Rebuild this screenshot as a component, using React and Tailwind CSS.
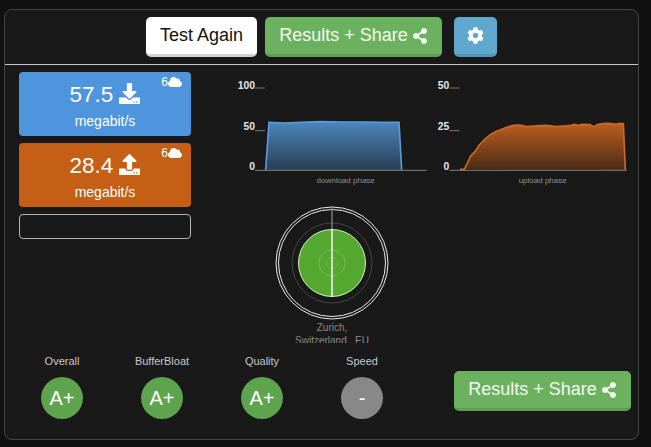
import React from "react";
import { FaCloud, FaCog, FaDownload, FaShareAlt, FaUpload } from "react-icons/fa";

const FONT = "font-['Liberation_Sans',Arial,sans-serif]";

const uploadLine =
  "90,298 103,298 112,280 122,258 135,245 148,225 165,207 182,193 197,185 215,178 232,171 250,166 270,165 290,170 310,168 330,167 350,166 378,170 400,168 420,167 432,163 445,166 458,163 480,164 490,170 505,163 525,160 545,161 558,163 570,160 580,161 586,300";
const downloadLine =
  "122,300 132,157 180,159 230,157 290,155 350,156 420,156 470,157 522,157 530,300";

function Tile({ value, Icon, color }) {
  return (
    <div className={`relative h-16 rounded text-white text-center ${color}`}>
      <div className="absolute top-[3px] right-[9px] flex items-center text-[12px] leading-[12px]">
        6<FaCloud className="text-[14px]" />
      </div>
      <div className="flex items-center justify-center gap-[6px] pt-[9px] h-[37px]">
        <span className="text-[22.5px] leading-[28px]">{value}</span>
        <Icon className="text-[21px] mb-[3px]" />
      </div>
      <div className="text-[14px] leading-[16px] pt-[4px]">megabit/s</div>
    </div>
  );
}

function PhaseChart({ id, line, stroke, top, bottom, labels, labelX, axisFrom, axisTo, caption, captionX }) {
  return (
    <svg viewBox="0 0 630 375" className="w-[210px] h-[125px] shrink-0">
      <defs>
        <linearGradient id={id} x1="0" y1="0" x2="0" y2="1">
          <stop offset="0" stopColor={top} />
          <stop offset="1" stopColor={bottom} />
        </linearGradient>
      </defs>
      <polygon points={line} fill={`url(#${id})`} />
      <polyline points={line} fill="none" stroke={stroke} strokeWidth="5" />
      <line x1={axisFrom} x2={axisTo} y1="301" y2="301" stroke="#808080" strokeWidth="3" />
      <line x1={labelX} x2={labelX + 30} y1="54" y2="54" stroke="#777" strokeWidth="3" />
      <line x1={labelX} x2={labelX + 30} y1="182" y2="182" stroke="#777" strokeWidth="3" />
      {labels.map(([text, y]) => (
        <text key={text} x={labelX} y={y} textAnchor="end" fill="#e5e5e5" fontSize="31" fontWeight="700">
          {text}
        </text>
      ))}
      <text x={captionX} y="338" textAnchor="middle" fill="#909090" fontSize="24">
        {caption}
      </text>
    </svg>
  );
}

function Grade({ label, value, color }) {
  return (
    <div className="w-[100px] flex flex-col items-center">
      <div className="text-[11px] leading-[13px] text-[#c8c8c8]">{label}</div>
      <div className={`mt-[9px] w-[42px] h-[42px] rounded-full flex items-center justify-center text-white text-[20px] ${color}`}>
        {value}
      </div>
    </div>
  );
}

function ShareButton({ className }) {
  return (
    <button className={`w-[177px] h-10 rounded-[5px] bg-[#6cb15f] border-b-[3px] border-[#5f9d54] text-[#f2fbef] text-[18px] flex items-center justify-center gap-[4px] ${className}`}>
      Results + Share
      <FaShareAlt className="text-[16px]" />
    </button>
  );
}

export default function App() {
  return (
    <div className={`w-[651px] h-[447px] overflow-hidden bg-[#111111] pt-[9px] pl-[4px] ${FONT}`}>
      <div className="w-[635px] h-[431px] rounded-lg border border-[#444444] bg-[#191919]">
        <div className="h-[55px] pt-[7px] border-b border-[#c8c8c8] flex justify-center items-start">
          <button className="w-[111px] h-10 rounded-[5px] bg-white border-b-[3px] border-[#d2d2d2] text-[#111] text-[18px]">
            Test Again
          </button>
          <ShareButton className="ml-2" />
          <button className="w-[43px] h-10 ml-3 rounded-[5px] bg-[#5fa8cd] border-b-[3px] border-[#5195b8] text-white flex items-center justify-center">
            <FaCog className="text-[17px]" />
          </button>
        </div>

        <div className="flex h-[278px]">
          <div className="w-[172px] shrink-0 ml-[14px] pt-[7px] flex flex-col gap-[7px]">
            <Tile value="57.5" Icon={FaDownload} color="bg-[#4f95dd]" />
            <Tile value="28.4" Icon={FaUpload} color="bg-[#c45f15]" />
            <div className="h-[25px] rounded border border-[#b5b5b5]" />
          </div>

          <div className="ml-[34px] pt-[5px] shrink-0">
            <div className="flex w-[410px]">
              <PhaseChart
                id="down"
                line={downloadLine}
                stroke="#5a9ad8"
                top="#4c86bf"
                bottom="#2a3e52"
                labels={[["100", 56], ["50", 180], ["0", 299]]}
                labelX={90}
                axisFrom={90}
                axisTo={605}
                caption="download phase"
                captionX={362}
              />
              <div className="-ml-[5px]">
                <PhaseChart
                  id="up"
                  line={uploadLine}
                  stroke="#c9692c"
                  top="#bd5f20"
                  bottom="#4a2a15"
                  labels={[["50", 56], ["25", 180], ["0", 299]]}
                  labelX={58}
                  axisFrom={58}
                  axisTo={590}
                  caption="upload phase"
                  captionX={338}
                />
              </div>
            </div>

            <div className="w-[214px] mt-[10px] flex flex-col items-center">
              <svg viewBox="0 0 116 116" className="w-[116px] h-[116px]">
                <circle cx="58" cy="58" r="56" fill="none" stroke="#e8e8e8" strokeWidth="1" />
                <circle cx="58" cy="58" r="53.5" fill="none" stroke="#e8e8e8" strokeWidth="1" />
                <circle cx="58" cy="58" r="40" fill="none" stroke="#444" strokeWidth="1" />
                <line x1="58" x2="58" y1="3" y2="24" stroke="#777" strokeWidth="1.5" />
                <circle cx="58" cy="58" r="33.5" fill="#55a82f" stroke="#d8efc8" strokeWidth="1" />
                <circle cx="58" cy="58" r="13" fill="none" stroke="#74bb52" strokeWidth="1" />
                <circle cx="58" cy="58" r="6" fill="none" stroke="#66b244" strokeWidth="1" />
                <line x1="58" x2="58" y1="24" y2="92" stroke="#f4f4f4" strokeWidth="1.5" />
              </svg>
              <div className="h-[22px] w-[110px] overflow-hidden text-center text-[10px] leading-[13px] text-[#8a8a8a]">
                Zurich,
                <br />
                Switzerland , EU
              </div>
            </div>
          </div>
        </div>

        <div className="flex items-start pl-[7px]">
          <div className="flex pt-[12px]">
            <Grade label="Overall" value="A+" color="bg-[#5ea34e]" />
            <Grade label="BufferBloat" value="A+" color="bg-[#5ea34e]" />
            <Grade label="Quality" value="A+" color="bg-[#5ea34e]" />
            <Grade label="Speed" value="-" color="bg-[#888888]" />
          </div>
          <ShareButton className="ml-[42px] mt-[28px]" />
        </div>
      </div>
    </div>
  );
}
